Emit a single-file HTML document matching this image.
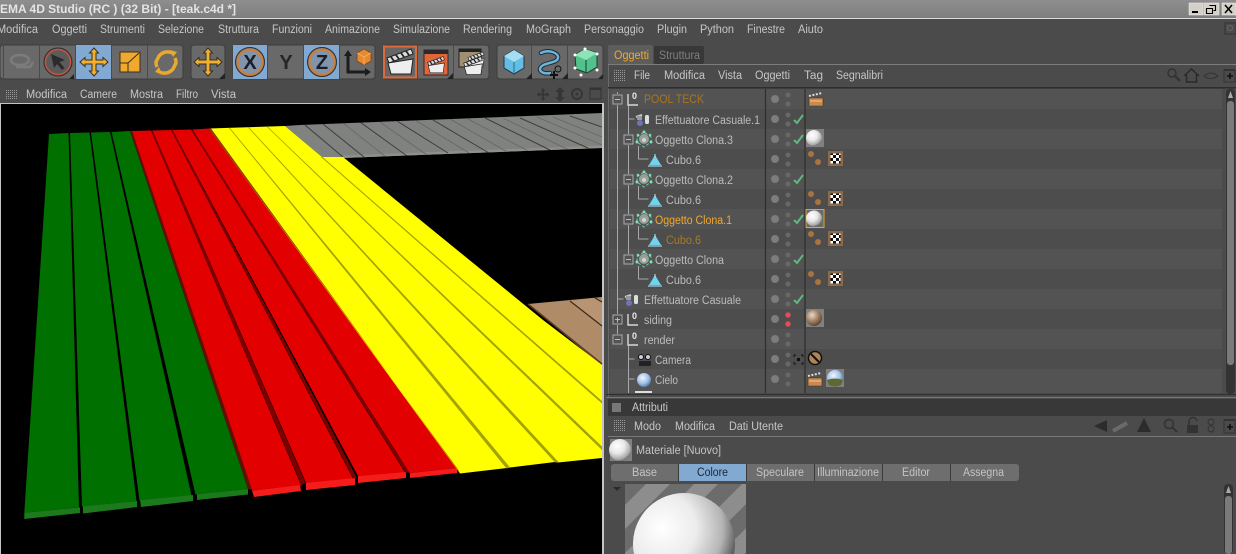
<!DOCTYPE html>
<html><head><meta charset="utf-8"><style>
html,body{margin:0;padding:0;width:1236px;height:554px;background:#4b4b4b;overflow:hidden}
svg{display:block}
text{font-family:"Liberation Sans",sans-serif;font-size:11.5px;fill:#c4c4c4}
.m text{fill:#c6c6c6}
.r text{fill:#bcbcbc;font-size:11.5px}
</style></head><body>
<svg width="1236" height="554" viewBox="0 0 1236 554" xmlns="http://www.w3.org/2000/svg">
<defs>
<clipPath id="grayclip"><polygon points="285,126 300,125 602,113 602,148 343,158 322,157"/></clipPath>
<linearGradient id="tb" x1="0" x2="0" y1="0" y2="1"><stop offset="0" stop-color="#8e8e8e"/><stop offset="1" stop-color="#7e7e7e"/></linearGradient>
<radialGradient id="sph" cx=".38" cy=".32" r=".75"><stop offset="0" stop-color="#fff"/><stop offset=".45" stop-color="#e8e8e8"/><stop offset=".8" stop-color="#aaa"/><stop offset="1" stop-color="#555"/></radialGradient>
<radialGradient id="bigsph" gradientUnits="userSpaceOnUse" cx="662" cy="528" r="76"><stop offset="0" stop-color="#fff"/><stop offset=".45" stop-color="#ececec"/><stop offset=".8" stop-color="#b4b4b4"/><stop offset="1" stop-color="#5a5a5a"/></radialGradient>
<radialGradient id="sphb" cx=".38" cy=".32" r=".75"><stop offset="0" stop-color="#e8d8c8"/><stop offset=".5" stop-color="#a58468"/><stop offset="1" stop-color="#4a3a2c"/></radialGradient>
<radialGradient id="sky" cx=".4" cy=".35" r=".7"><stop offset="0" stop-color="#f0f6ff"/><stop offset=".6" stop-color="#9fc0e8"/><stop offset="1" stop-color="#4d6f98"/></radialGradient>
<pattern id="dots" width="2" height="2" patternUnits="userSpaceOnUse"><rect width="1" height="1" fill="#9a9a9a"/></pattern>
<pattern id="chk" width="6" height="6" patternUnits="userSpaceOnUse"><rect width="6" height="6" fill="#fff"/><rect width="3" height="3" fill="#111"/><rect x="3" y="3" width="3" height="3" fill="#111"/></pattern>
<pattern id="stp" width="34" height="34" patternUnits="userSpaceOnUse" patternTransform="rotate(45)"><rect width="34" height="34" fill="#8d8d8d"/><rect width="17" height="34" fill="#6c6c6c"/></pattern>
<g id="mv"><path d="M0-14l4.500 5h-2.500v7h7v-2.500l5 4.500-5 4.500v-2.500h-7v7h2.500l-4.500 5-4.500-5h2.500v-7h-7v2.500l-5-4.500 5-4.500v2.500h7v-7h-2.500z" fill="#f2b02e" stroke="#33302a" stroke-width="1"/></g>
<g id="clap"><path d="M-13-4l24-9 2 5-24 9z" fill="#ddd" stroke="#222"/><path d="M-9-5l3 4M-4-7l3 4M1-9l3 4M6-11l3 4" stroke="#222" stroke-width="1.800"/><path d="M-12 1l25-4-2 15h-20z" fill="#eee" stroke="#222"/></g>
<g id="mini"><path d="M-7-2h14v8h-14z" fill="#c98a4e" stroke="#4a3524" stroke-width=".6"/><path d="M-7-4l13-3" stroke="#ddd" stroke-width="2" stroke-dasharray="2 1.500"/><path d="M-6 0h12v2h-12z" fill="#e0a870"/></g>
<g id="clone"><circle r="5" fill="#98a09a"/><path d="M-7-2l7-5 7 5v5l-7 5-7-5z" fill="none" stroke="#62d0a8" stroke-width="1" stroke-dasharray="3 2"/><circle cx="0" cy="-7" r="1.500" fill="#7fe0b0"/><circle cx="-7" cy="3" r="1.500" fill="#7fe0b0"/><circle cx="7" cy="3" r="1.500" fill="#7fe0b0"/><circle cx="-6" cy="-4" r="1.300" fill="#7fe0b0"/><circle cx="6" cy="-4" r="1.300" fill="#7fe0b0"/><circle cx="0" cy="1" r="2" fill="#d0d4d0"/></g>
<g id="tri"><path d="M0-5l6 10h-12z" fill="#6fd3ee"/><path d="M-7 6h14" stroke="#bfefff" stroke-width="1"/><path d="M0-6v3" stroke="#c4f0ff"/></g>
<g id="uv"><circle cx="-1" cy="-4" r="3" fill="#a9743e"/><circle cx="6" cy="4" r="3" fill="#a9743e"/><rect x="16" y="-7" width="15" height="15" fill="#8a6a48"/><rect x="18.500" y="-4.500" width="10" height="10" fill="url(#chk)"/></g>
<g id="null"><path d="M0-5v11h10" fill="none" stroke="#d8d8d8" stroke-width="1.400"/><text x="4" y="0" style="font-size:9px;font-weight:bold;fill:#e8e8e8">0</text></g>
<g id="dd"><circle cx="775" cy="0" r="4" fill="#7c7c7c"/><circle cx="788" cy="-4" r="2.500" fill="#686868"/><circle cx="788" cy="5" r="2.500" fill="#686868"/></g>
<g id="ck"><path d="M794 1l3 3 6-8" fill="none" stroke="#5cba80" stroke-width="2"/></g>
<g id="bx"><rect x="-4.500" y="-4.500" width="9" height="9" fill="none" stroke="#aaa"/><path d="M-2.500 0h5" stroke="#bbb"/></g>
</defs>

<rect width="1236" height="554" fill="#4b4b4b"/>
<!-- title -->
<rect width="1236" height="18" fill="url(#tb)"/>
<rect y="18" width="1236" height="1" fill="#dcdcdc"/>
<text x="0" y="13" textLength="236" lengthAdjust="spacingAndGlyphs" style="font-weight:bold;font-size:12px;fill:#e4e4e4">EMA 4D Studio (RC ) (32 Bit) - [teak.c4d *]</text>
<g>
<rect x="1189" y="3" width="14" height="12" fill="#d4d0c8" stroke="#f4f4f4" stroke-width=".5"/><rect x="1192" y="11" width="6" height="2" fill="#000"/>
<rect x="1204" y="3" width="15" height="12" fill="#d4d0c8" stroke="#f4f4f4" stroke-width=".5"/><path d="M1209.500 5.500h6v5h-2M1206.500 8.500h6v5h-6z" fill="none" stroke="#000" stroke-width="1.100"/>
<rect x="1222" y="3" width="14" height="12" fill="#d4d0c8" stroke="#f4f4f4" stroke-width=".5"/><path d="M1225 5l7 8M1232 5l-7 8" stroke="#000" stroke-width="1.500"/>
</g>
<!-- menu -->
<g class="m">
<text x="-3" y="33" textLength="41" lengthAdjust="spacingAndGlyphs">Modifica</text>
<text x="52" y="33" textLength="35" lengthAdjust="spacingAndGlyphs">Oggetti</text>
<text x="100" y="33" textLength="45" lengthAdjust="spacingAndGlyphs">Strumenti</text>
<text x="158" y="33" textLength="46" lengthAdjust="spacingAndGlyphs">Selezione</text>
<text x="218" y="33" textLength="41" lengthAdjust="spacingAndGlyphs">Struttura</text>
<text x="272" y="33" textLength="40" lengthAdjust="spacingAndGlyphs">Funzioni</text>
<text x="325" y="33" textLength="55" lengthAdjust="spacingAndGlyphs">Animazione</text>
<text x="393" y="33" textLength="57" lengthAdjust="spacingAndGlyphs">Simulazione</text>
<text x="463" y="33" textLength="49" lengthAdjust="spacingAndGlyphs">Rendering</text>
<text x="526" y="33" textLength="45" lengthAdjust="spacingAndGlyphs">MoGraph</text>
<text x="584" y="33" textLength="60" lengthAdjust="spacingAndGlyphs">Personaggio</text>
<text x="657" y="33" textLength="30" lengthAdjust="spacingAndGlyphs">Plugin</text>
<text x="700" y="33" textLength="34" lengthAdjust="spacingAndGlyphs">Python</text>
<text x="747" y="33" textLength="38" lengthAdjust="spacingAndGlyphs">Finestre</text>
<text x="798" y="33" textLength="25" lengthAdjust="spacingAndGlyphs">Aiuto</text>
</g>
<rect x="1225" y="23" width="11" height="11" fill="none" stroke="#333"/><circle cx="1230" cy="28" r="2.500" fill="none" stroke="#666"/>

<!-- toolbar groups -->
<g fill="#696969" stroke="#3c3c3c">
<rect x="0" y="45" width="183" height="34" rx="3"/>
<rect x="191" y="45" width="34" height="34" rx="3"/>
<rect x="233" y="45" width="142" height="34" rx="3"/>
<rect x="383" y="45" width="106" height="34" rx="3"/>
<rect x="497" y="45" width="106" height="34" rx="3"/>
</g>
<g fill="#82a9d2">
<rect x="76" y="45" width="35" height="34"/><rect x="233" y="45" width="34" height="34"/><rect x="304" y="45" width="35" height="34"/>
</g>
<g stroke="#4a4a4a">
<path d="M3.500 45v34M39.500 45v34M75.500 45v34M111.500 45v34M147.500 45v34M267.500 45v34M303.500 45v34M339.500 45v34M417.500 45v34M453.500 45v34M531.500 45v34M567.500 45v34"/>
</g>
<!-- ghost -->
<g fill="none" stroke="#7c7c7c" stroke-width="2.500"><ellipse cx="20" cy="60" rx="9" ry="5"/><path d="M16 67h14l3-5"/></g>
<!-- cursor -->
<circle cx="58" cy="62" r="14" fill="#5b5b5b" stroke="#2f2f2f" stroke-width="1"/><circle cx="58" cy="62" r="12.500" fill="none" stroke="#c2533f" stroke-width="1.500"/>
<path d="M51 54l14 6-5.500 2 5 6-2.500 2-5-6-3 4z" fill="#2b2b2b"/>
<path d="M69 79l5-5v5z" fill="#222"/>
<use href="#mv" x="94" y="62"/>
<rect x="120" y="52" width="20" height="20" fill="#f0a92c" stroke="#3a3020"/><path d="M128 72V63h-8M128 63l11-10" stroke="#3a3020" fill="none"/>
<g fill="none" stroke="#e9a82e" stroke-width="3.500"><path d="M174 54a11 11 0 0 0-15 2l-3 6a11 11 0 0 0 1 5"/><path d="M158 71a11 11 0 0 0 15-2l3-6a11 11 0 0 0-1-5"/></g>
<path d="M170 50l7 2-4 5zM162 74l-7-2 4-5z" fill="#e9a82e"/>
<use href="#mv" x="208" y="62"/><path d="M219 79l6-6v6z" fill="#222"/>
<!-- XYZ -->
<circle cx="250" cy="62" r="14.500" fill="#6d7f94" stroke="#2d2d2d"/><circle cx="250" cy="62" r="12.500" fill="#8094ac" stroke="#cc7f38" stroke-width="2.200"/>
<text x="250" y="69" text-anchor="middle" style="font-size:20px;font-weight:bold;fill:#1a1e27">X</text>
<text x="286" y="69" text-anchor="middle" style="font-size:20px;font-weight:bold;fill:#262626">Y</text>
<circle cx="322" cy="62" r="14.500" fill="#6d7f94" stroke="#2d2d2d"/><circle cx="322" cy="62" r="12.500" fill="#8094ac" stroke="#cc7f38" stroke-width="2.200"/>
<text x="322" y="69" text-anchor="middle" style="font-size:20px;font-weight:bold;fill:#1a1e27">Z</text>
<path d="M348 52v20h18" fill="none" stroke="#1c1c1c" stroke-width="3"/><path d="M344 56l4-6 4 6zM365 68l6 4-6 4z" fill="#1c1c1c"/>
<path d="M357 53l7-4 7 4v8l-7 4-7-4z" fill="#e58a2e" stroke="#6a3d14" stroke-width=".7"/><path d="M357 53l7 4 7-4M364 57v8" stroke="#f8b060" stroke-width=".8" fill="none"/>
<!-- clappers -->
<rect x="384" y="46.500" width="32" height="31" fill="#666" stroke="#e0693a" stroke-width="2"/>
<use href="#clap" x="400" y="62"/>
<rect x="424" y="50" width="24" height="25" fill="#e2653a" stroke="#2a2a2a"/><rect x="424" y="50" width="24" height="4" fill="#2a2a2a"/>
<use transform="translate(436 65) scale(.65)" href="#clap"/><path d="M447 79l6-6v6z" fill="#222"/>
<rect x="459" y="49" width="22" height="18" fill="#a08f72" stroke="#222"/><rect x="459" y="49" width="22" height="3" fill="#222"/>
<use transform="translate(476 60) scale(.62)" href="#clap"/><use transform="translate(473 66) scale(.72)" href="#clap"/>
<!-- cube, spline, green -->
<path d="M504 56l10-6 10 6v12l-10 6-10-6z" fill="#64bde2" stroke="#234"/><path d="M504 56l10 6 10-6-10-6z" fill="#a4def2"/><path d="M514 62v12" stroke="#2b6a88"/>
<path d="M526 79l6-6v6z" fill="#222"/>
<g fill="none" stroke-linecap="round"><path d="M541 53c8-4 18 0 17 5-1 6-17 4-18 11 0 4 6 5 10 4" stroke="#1e2a34" stroke-width="4.500"/><path d="M541 53c8-4 18 0 17 5-1 6-17 4-18 11 0 4 6 5 10 4" stroke="#6cb4da" stroke-width="2.500"/></g>
<path d="M553 71h2v3h3v2h-3v3h-2v-3h-3v-2h3z" fill="#111"/><circle cx="558" cy="69" r="3" fill="none" stroke="#111"/>
<path d="M562 79l6-6v6z" fill="#222"/>
<path d="M575 55l10-6 12 4v14l-10 6-11-4z" fill="#52c18c" stroke="#1b3c2c"/><path d="M575 55l11 5 11-7-12-4z" fill="#8ee4b8"/><path d="M586 60v13" stroke="#1b3c2c"/>
<g fill="#fff"><circle cx="575" cy="55" r="1.500"/><circle cx="597" cy="54" r="1.500"/><circle cx="585" cy="49" r="1.500"/><circle cx="575" cy="68" r="1.500"/><circle cx="597" cy="70" r="1.500"/><circle cx="581" cy="75" r="1.500"/></g>
<path d="M598 79l5-5v5z" fill="#222"/>

<!-- viewport menu -->
<rect x="6" y="89" width="11" height="11" fill="url(#dots)"/>
<g class="m">
<text x="26" y="98" textLength="41" lengthAdjust="spacingAndGlyphs">Modifica</text>
<text x="80" y="98" textLength="37" lengthAdjust="spacingAndGlyphs">Camere</text>
<text x="130" y="98" textLength="33" lengthAdjust="spacingAndGlyphs">Mostra</text>
<text x="176" y="98" textLength="22" lengthAdjust="spacingAndGlyphs">Filtro</text>
<text x="211" y="98" textLength="25" lengthAdjust="spacingAndGlyphs">Vista</text>
</g>
<g fill="#363636"><path d="M543 88l2.500 3h-1.500v2.500h2.500v-1.500l3 2.500-3 2.500v-1.500h-2.500v2.500h1.500l-2.500 3-2.500-3h1.500v-2.500h-2.500v1.500l-3-2.500 3-2.500v1.500h2.500v-2.500h-1.500z"/><path d="M560 87l5 5h-3v5h3l-5 5-5-5h3v-5h-3z"/></g>
<circle cx="577" cy="94" r="5" fill="none" stroke="#363636" stroke-width="2"/><circle cx="577" cy="94" r="1.500" fill="#363636"/>
<rect x="590" y="88" width="11" height="11" fill="none" stroke="#333"/><rect x="590" y="88" width="11" height="2" fill="#333"/>

<!-- viewport -->
<rect x="0" y="103" width="604" height="451" fill="#c4c4c4"/>
<rect x="1" y="104" width="601" height="450" fill="#000"/>
<!-- gray plank -->
<polygon points="285,126 300,125 602,113 602,148 343,158 322,157" fill="#808280"/>
<polygon points="343,158 602,148 602,145.500 343,155.500" fill="#8e908c"/>
<g clip-path="url(#grayclip)">
<g stroke="#3c3e3c" fill="none" stroke-width="1">
<path d="M305 125L343 157M323 124L364 157M360 122L407 156M397 121L448 153M433 120L489 153M485 118L550 150M520 118L588 148M570 116L602 127"/>
</g>
<g stroke="#646664" fill="none" stroke-width=".8">
<path d="M343 123L386 157M380 122L427 155M415 120L469 153M450 119L509 153M468 119L530 152M503 118L569 150M537 117L602 145M553 117L602 137"/>
</g>
</g>
<!-- wood -->
<polygon points="528,304 602,297 602,366" fill="#b08b67"/>
<polygon points="570,301 595,298 602,302 602,326" fill="#b99472"/>
<path d="M570 301L602 326M595 298L602 302" stroke="#3a2a1c" stroke-width="1.200" fill="none"/>
<path d="M528 304L602 364" stroke="#5c3c20" stroke-width="1.500" fill="none"/>

<!-- green faces -->
<polygon points="49,134 68.500,133 79,507.300 24.300,512.700" fill="#007000"/>
<polygon points="70,133 89.500,132.500 136.500,501 82,506.500" fill="#007000"/>
<polygon points="91,132.500 110,132 191.500,495.500 139.500,500.500" fill="#007000"/>
<polygon points="111.500,132 130,131 248,489 195.500,494.500" fill="#007000"/>
<polygon points="24.300,512.700 80,507.300 80,513 24.300,519" fill="#1c7a1c"/>
<polygon points="83,506.300 137,501 137,507 83,513.500" fill="#1c7a1c"/>
<polygon points="140,500.300 193,495 193,501 141,507" fill="#1c7a1c"/>
<polygon points="197,494.300 248,489 248,494.500 197,500" fill="#1c7a1c"/>
<!-- red faces -->
<polygon points="132,131 151,130.500 301,485 252,490.700" fill="#e20000"/>
<polygon points="152.500,130.500 171,130 353,478.500 306,482.700" fill="#e20000"/>
<polygon points="172.500,130 191,129.500 405,472.500 358,476" fill="#e20000"/>
<polygon points="192.500,129.500 209,128.500 457,468 409.500,473" fill="#e20000"/>
<polygon points="252,490.700 300,485 301,491 254,497" fill="#f51c1c"/>
<polygon points="306,482.700 355,478 355,485 306,490" fill="#f51c1c"/>
<polygon points="358,476 406,472 406,478 358,483" fill="#f51c1c"/>
<polygon points="410,473 457,468 457,473 410,478" fill="#f51c1c"/>
<!-- red gaps -->
<g fill="#7c0000">
<polygon points="151,130.500 152.500,130.500 305.500,483 301.500,485"/>
<polygon points="171,130 172.500,130 357,478 353.500,478.500"/>
<polygon points="191,129.500 192.500,129.500 409,472.500 405.500,472.500"/>
</g>
<polygon points="130,131 132,131 252,490 248,489" fill="#601000"/>
<!-- yellow -->
<polygon points="209,128.500 285,126 322,157 343,157 543,320 602,365 602,458 558,462.500 555,462 510,467.500 507,468 460,473.500" fill="#ffff00"/>
<polygon points="209,128.500 211,128.500 460,473 457,468" fill="#8a3a00"/>
<g fill="#a2a200">
<polygon points="229,128 230,128 510,467.500 506.500,468.500"/>
<polygon points="248,127.500 249,127.500 558.500,462 555,462.500"/>
<polygon points="267,127 268,127 602,446.500 602,450"/>
<polygon points="321,157 322.500,157 602,401 602,403.500"/>
</g>

<!-- right panel -->
<rect x="608" y="45" width="45" height="20" rx="2" fill="#5d5d5d"/>
<rect x="654" y="46" width="50" height="18" rx="2" fill="#383838"/>
<text x="614" y="59" textLength="35" lengthAdjust="spacingAndGlyphs" style="fill:#f0a92c">Oggetti</text>
<text x="659" y="59" textLength="41" lengthAdjust="spacingAndGlyphs" style="fill:#7f7f7f">Struttura</text>
<rect x="608" y="64" width="628" height="1" fill="#7c7c7c"/>
<rect x="608" y="65" width="1" height="332" fill="#6a6a6a"/>
<rect x="614" y="69" width="11" height="12" fill="url(#dots)"/>
<g class="m">
<text x="634" y="79" textLength="16" lengthAdjust="spacingAndGlyphs">File</text>
<text x="664" y="79" textLength="41" lengthAdjust="spacingAndGlyphs">Modifica</text>
<text x="718" y="79" textLength="24" lengthAdjust="spacingAndGlyphs">Vista</text>
<text x="755" y="79" textLength="35" lengthAdjust="spacingAndGlyphs">Oggetti</text>
<text x="804" y="79" textLength="19" lengthAdjust="spacingAndGlyphs">Tag</text>
<text x="836" y="79" textLength="47" lengthAdjust="spacingAndGlyphs">Segnalibri</text>
</g>
<circle cx="1172" cy="73" r="4" fill="none" stroke="#333" stroke-width="1.500"/><path d="M1175 76l5 5" stroke="#333" stroke-width="2.500"/>
<path d="M1184 76l7.500-7 7.500 7M1186.500 74v8h10v-8" fill="none" stroke="#2a2a2a" stroke-width="1.500"/>
<path d="M1204 76q7-6 14 0q-7 5-14 0z" fill="none" stroke="#333"/>
<rect x="1224" y="70" width="11" height="12" fill="none" stroke="#333"/><path d="M1227 76h6M1230 73v6" stroke="#111" stroke-width="1.600"/><rect x="1224" y="69" width="11" height="2" fill="#333"/>
<rect x="608" y="87" width="628" height="1.500" fill="#2e2e2e"/>

<!-- rows -->
<g fill="#535353">
<rect x="610" y="89" width="612" height="20"/><rect x="610" y="129" width="612" height="20"/><rect x="610" y="169" width="612" height="20"/><rect x="610" y="209" width="612" height="20"/><rect x="610" y="249" width="612" height="20"/><rect x="610" y="289" width="612" height="20"/><rect x="610" y="329" width="612" height="20"/><rect x="610" y="369" width="612" height="24"/>
</g>
<g fill="#4d4d4d">
<rect x="610" y="109" width="612" height="20"/><rect x="610" y="149" width="612" height="20"/><rect x="610" y="189" width="612" height="20"/><rect x="610" y="229" width="612" height="20"/><rect x="610" y="269" width="612" height="20"/><rect x="610" y="309" width="612" height="20"/><rect x="610" y="349" width="612" height="20"/>
</g>
<path d="M765.500 89v304M805 89v304" stroke="#2e2e2e" stroke-width="1.200"/>
<!-- tree lines -->
<g stroke="#a8a8a8" stroke-width="1" fill="none">
<path d="M617.500 92v248M628.500 105v150M628.500 345v48"/>
<path d="M628.500 119h6M638.500 146v13h10M638.500 186v13h10M638.500 226v13h10M638.500 266v13h10M617.500 299h6M628.500 359h6M628.500 379h6"/>
</g>
<rect x="612" y="94" width="11" height="11" fill="#535353"/><use href="#bx" x="617.500" y="99.500"/>
<rect x="623" y="134" width="11" height="11" fill="#535353"/><use href="#bx" x="628.500" y="139.500"/>
<rect x="623" y="174" width="11" height="11" fill="#535353"/><use href="#bx" x="628.500" y="179.500"/>
<rect x="623" y="214" width="11" height="11" fill="#535353"/><use href="#bx" x="628.500" y="219.500"/>
<rect x="623" y="254" width="11" height="11" fill="#535353"/><use href="#bx" x="628.500" y="259.500"/>
<rect x="612" y="314" width="11" height="11" fill="#4d4d4d"/><use href="#bx" x="617.500" y="319.500"/><path d="M617.500 317.500v5" stroke="#bbb"/>
<rect x="612" y="334" width="11" height="11" fill="#535353"/><use href="#bx" x="617.500" y="339.500"/>
<!-- icons col -->
<use href="#null" x="628" y="99"/><use href="#null" x="628" y="319"/><use href="#null" x="628" y="339"/>
<g id="rnd"><path d="M636 117l6-2" stroke="#ccc" stroke-width="2"/><circle cx="640" cy="123" r="3" fill="#6d74bc"/><rect x="645" y="115" width="4" height="9" rx="1.500" fill="#ddd"/><rect x="637" y="116" width="5" height="4" fill="#999"/></g>
<use href="#rnd" transform="translate(-11 180)"/>
<use href="#clone" x="644" y="139"/><use href="#clone" x="644" y="179"/><use href="#clone" x="644" y="219"/><use href="#clone" x="644" y="259"/>
<use href="#tri" x="655" y="160"/><use href="#tri" x="655" y="200"/><use href="#tri" x="655" y="240"/><use href="#tri" x="655" y="280"/>
<g><rect x="639" y="361" width="12" height="5" fill="#222"/><circle cx="641" cy="357" r="2.500" fill="#ccd" stroke="#111"/><circle cx="648" cy="357" r="2.500" fill="#ccd" stroke="#111"/></g>
<circle cx="644" cy="380" r="7" fill="url(#sky)"/>
<rect x="635" y="391" width="17" height="2" fill="#ddd"/>
<!-- text -->
<g class="r">
<text x="644" y="103" textLength="60" lengthAdjust="spacingAndGlyphs" style="fill:#a8761e">POOL TECK</text>
<text x="655" y="124" textLength="105" lengthAdjust="spacingAndGlyphs">Effettuatore Casuale.1</text>
<text x="655" y="144" textLength="78" lengthAdjust="spacingAndGlyphs">Oggetto Clona.3</text>
<text x="666" y="164" textLength="35" lengthAdjust="spacingAndGlyphs">Cubo.6</text>
<text x="655" y="184" textLength="78" lengthAdjust="spacingAndGlyphs">Oggetto Clona.2</text>
<text x="666" y="204" textLength="35" lengthAdjust="spacingAndGlyphs">Cubo.6</text>
<text x="655" y="224" textLength="77" lengthAdjust="spacingAndGlyphs" style="fill:#f2a92c">Oggetto Clona.1</text>
<text x="666" y="244" textLength="35" lengthAdjust="spacingAndGlyphs" style="fill:#a87a28">Cubo.6</text>
<text x="655" y="264" textLength="69" lengthAdjust="spacingAndGlyphs">Oggetto Clona</text>
<text x="666" y="284" textLength="35" lengthAdjust="spacingAndGlyphs">Cubo.6</text>
<text x="644" y="304" textLength="97" lengthAdjust="spacingAndGlyphs">Effettuatore Casuale</text>
<text x="644" y="324" textLength="28" lengthAdjust="spacingAndGlyphs">siding</text>
<text x="644" y="344" textLength="31" lengthAdjust="spacingAndGlyphs">render</text>
<text x="655" y="364" textLength="36" lengthAdjust="spacingAndGlyphs">Camera</text>
<text x="655" y="384" textLength="23" lengthAdjust="spacingAndGlyphs">Cielo</text>
</g>
<!-- dots -->
<use href="#dd" y="99"/><use href="#dd" y="119"/><use href="#dd" y="139"/><use href="#dd" y="159"/><use href="#dd" y="179"/><use href="#dd" y="199"/><use href="#dd" y="219"/><use href="#dd" y="239"/><use href="#dd" y="259"/><use href="#dd" y="279"/><use href="#dd" y="299"/>
<circle cx="775" cy="319" r="4" fill="#7c7c7c"/><circle cx="788" cy="315" r="2.700" fill="#e84a58"/><circle cx="788" cy="324" r="2.700" fill="#e84a58"/>
<use href="#dd" y="339"/><use href="#dd" y="359"/><use href="#dd" y="379"/>
<use href="#ck" y="119"/><use href="#ck" y="139"/><use href="#ck" y="179"/><use href="#ck" y="219"/><use href="#ck" y="259"/><use href="#ck" y="299"/>
<path d="M794 355h2M801 355h2M794 364h2M801 364h2M794 355v2M794 362v2M803 355v2M803 362v2" stroke="#111"/><rect x="797" y="358" width="3" height="3" fill="#111"/>
<!-- tags -->
<use href="#mini" x="816" y="100"/>
<rect x="806" y="129" width="18" height="18" fill="#808080"/><circle cx="814" cy="138" r="8" fill="url(#sph)"/>
<use href="#uv" x="812" y="158"/><use href="#uv" x="812" y="198"/>
<rect x="806" y="209.500" width="18" height="18" fill="#6a6a6a" stroke="#e8a42a"/><circle cx="814" cy="218.500" r="8" fill="url(#sph)"/>
<use href="#uv" x="812" y="238"/><use href="#uv" x="812" y="278"/>
<rect x="806" y="309" width="18" height="18" fill="#808080"/><circle cx="814" cy="318" r="8" fill="url(#sphb)"/>
<circle cx="815" cy="358" r="6.500" fill="#b08454" stroke="#111" stroke-width="1.500"/><path d="M811 354l8 8" stroke="#111" stroke-width="2"/>
<use href="#mini" x="815" y="380"/>
<rect x="826" y="369" width="18" height="18" fill="#808080"/><circle cx="835" cy="378" r="8" fill="url(#sky)"/><path d="M827 380q8-3 16 0l-2 5q-6 3-12 0z" fill="#5c6a30"/>
<!-- scrollbar -->
<rect x="1226" y="89" width="9" height="305" rx="4" fill="#333"/>
<rect x="1227" y="101" width="7" height="264" rx="3" fill="#7a7a7a"/>
<path d="M1230.500 91l2.500 7h-5z" fill="#aaa"/>
<!-- attribute panel -->
<rect x="606" y="394" width="630" height="1" fill="#2f2f2f"/>
<rect x="606" y="397" width="630" height="1" fill="#787878"/>
<rect x="608" y="399" width="628" height="17" fill="#383838"/>
<rect x="612" y="403" width="9" height="9" fill="#777"/>
<text x="632" y="411" textLength="36" lengthAdjust="spacingAndGlyphs" style="fill:#c8c8c8">Attributi</text>
<rect x="614" y="420" width="11" height="12" fill="url(#dots)"/>
<g class="m">
<text x="634" y="430" textLength="27" lengthAdjust="spacingAndGlyphs">Modo</text>
<text x="675" y="430" textLength="40" lengthAdjust="spacingAndGlyphs">Modifica</text>
<text x="729" y="430" textLength="54" lengthAdjust="spacingAndGlyphs">Dati Utente</text>
</g>
<path d="M1094 426l13-6v12z" fill="#2c2c2c"/><path d="M1113 431l14-8" stroke="#6a6a6a" stroke-width="4"/><path d="M1144 418l7 14h-14z" fill="#2c2c2c"/>
<circle cx="1169" cy="424" r="4.500" fill="none" stroke="#333" stroke-width="1.500"/><path d="M1172 427l5 5" stroke="#333" stroke-width="2"/>
<rect x="1187" y="425" width="11" height="8" fill="#333"/><path d="M1189 425v-3a4 4 0 0 1 8-1" fill="none" stroke="#333" stroke-width="1.500"/>
<circle cx="1211" cy="422" r="3" fill="none" stroke="#333"/><circle cx="1211" cy="429" r="3" fill="none" stroke="#333"/>
<rect x="1224" y="420" width="11" height="13" fill="none" stroke="#333"/><rect x="1224" y="419" width="11" height="2" fill="#333"/><path d="M1227 427h6M1230 424v6" stroke="#111" stroke-width="1.600"/>
<rect x="608" y="436" width="628" height="1" fill="#787878"/>
<rect x="610" y="439" width="22" height="22" fill="#808080"/><circle cx="620" cy="450" r="11" fill="url(#sph)"/>
<text x="636" y="454" textLength="85" lengthAdjust="spacingAndGlyphs">Materiale [Nuovo]</text>
<rect x="611" y="464" width="408" height="17" rx="3" fill="#6e6e6e"/>
<rect x="679" y="464" width="67" height="17" fill="#82a9d2"/>
<path d="M678.500 464v17M746.500 464v17M814.500 464v17M882.500 464v17M950.500 464v17" stroke="#3a3a3a"/>
<text x="632" y="476" textLength="25" lengthAdjust="spacingAndGlyphs">Base</text>
<text x="697" y="476" textLength="31" lengthAdjust="spacingAndGlyphs" style="fill:#1f2530">Colore</text>
<text x="756" y="476" textLength="48" lengthAdjust="spacingAndGlyphs">Speculare</text>
<text x="817" y="476" textLength="62" lengthAdjust="spacingAndGlyphs">Illuminazione</text>
<text x="902" y="476" textLength="28" lengthAdjust="spacingAndGlyphs">Editor</text>
<text x="963" y="476" textLength="41" lengthAdjust="spacingAndGlyphs">Assegna</text>
<path d="M613 487h8l-4 4z" fill="#2a2a2a"/>
<rect x="625" y="484" width="121" height="70" fill="url(#stp)"/>
<path d="M634 554A51 51 0 1 1 734 554Z" fill="url(#bigsph)"/>
<rect x="1224" y="484" width="9" height="70" rx="4" fill="#333"/>
<rect x="1225" y="496" width="7" height="58" rx="3" fill="#7a7a7a"/>
<path d="M1228.500 486l2.500 7h-5z" fill="#aaa"/>
</svg>
</body></html>
